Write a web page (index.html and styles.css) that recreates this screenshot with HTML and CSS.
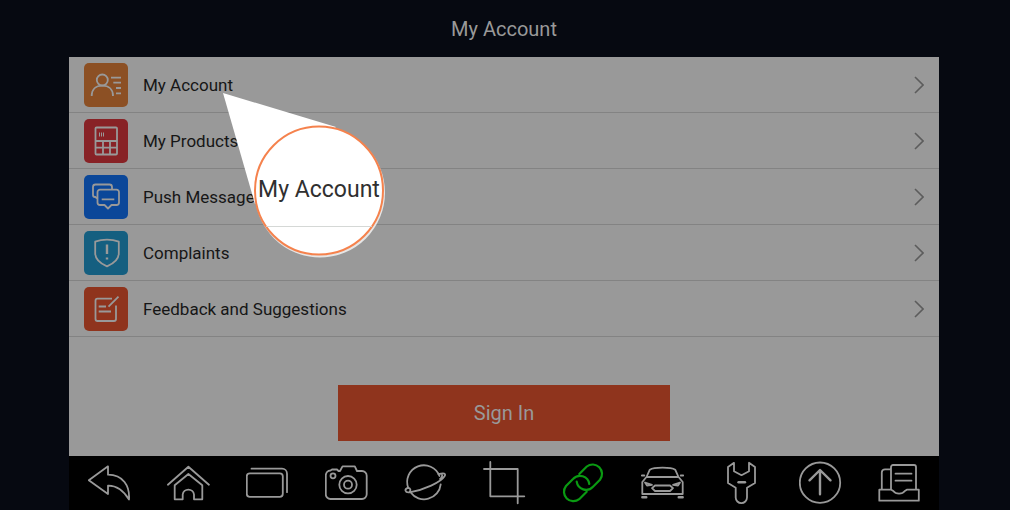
FILE: index.html
```html
<!DOCTYPE html>
<html lang="en">
<head>
<meta charset="utf-8">
<title>My Account</title>
<link rel="stylesheet" href="styles.css">
</head>
<body>
<div class="screen">
  <header class="header"><h1 class="title">My Account</h1></header>
  <main class="panel">
    <ul class="menu">
      <li><a class="row" href="#account">
        <svg class="tile orange" viewBox="0 0 44 44"><circle cx="18.300" cy="17" r="5.500"/><path d="M7.700 33c0-6.500 4-10.300 10.600-10.300S29 26.500 29 33M27 14.700h10M29.300 19.700H37M32 25h5M32 30.300h5"/></svg>
        <span class="label">My Account</span>
        <svg class="chevron" viewBox="0 0 10 18"><path d="M1 1l8 8-8 8"/></svg></a></li>
      <li><a class="row" href="#products">
        <svg class="tile red" viewBox="0 0 44 44"><rect x="11.500" y="8.500" width="21.500" height="27" rx="1"/><path d="M11.500 22H33M11.500 28.700H33M19 22v13.500M26 22v13.500"/><path class="thin" d="M15.500 13.500v4M17.500 13.500v4M19.500 13.500v4"/></svg>
        <span class="label">My Products</span>
        <svg class="chevron" viewBox="0 0 10 18"><path d="M1 1l8 8-8 8"/></svg></a></li>
      <li><a class="row" href="#messages">
        <svg class="tile blue" viewBox="0 0 44 44"><path d="M13 23.500l-1.500-1.500H11a2 2 0 0 1-2-2v-8a2.500 2.500 0 0 1 2.500-2.500h14A2.500 2.500 0 0 1 28 12v2"/><path d="M16 14.700h16.500A2.500 2.500 0 0 1 35 17.200v10.300a2.500 2.500 0 0 1-2.500 2.500H27.500l-3.500 3.500-3.500-3.500H16a2.500 2.500 0 0 1-2.500-2.500V17.200A2.500 2.500 0 0 1 16 14.700zM17.700 24.300h12.600"/></svg>
        <span class="label">Push Message</span>
        <svg class="chevron" viewBox="0 0 10 18"><path d="M1 1l8 8-8 8"/></svg></a></li>
      <li><a class="row" href="#complaints">
        <svg class="tile cyan" viewBox="0 0 44 44"><path d="M23 8.700c4.500 0 8.500.8 11.800 2v11.500c0 6-4.300 10-11.800 13.100-7.500-3.100-11.800-7.100-11.800-13.100V10.700c3.300-1.200 7.300-2 11.800-2z"/><path class="bold" d="M23 13.500V23M23 26.500v2"/></svg>
        <span class="label">Complaints</span>
        <svg class="chevron" viewBox="0 0 10 18"><path d="M1 1l8 8-8 8"/></svg></a></li>
      <li><a class="row" href="#feedback">
        <svg class="tile coral" viewBox="0 0 44 44"><path d="M28 11.700H13.500a2 2 0 0 0-2 2V32a2 2 0 0 0 2 2H30a2 2 0 0 0 2-2V18.500M34.500 9.700l-10 10M14.700 19.500H22M14.700 24.500H27"/></svg>
        <span class="label">Feedback and Suggestions</span>
        <svg class="chevron" viewBox="0 0 10 18"><path d="M1 1l8 8-8 8"/></svg></a></li>
    </ul>
    <div class="action"><button class="signin" type="button">Sign In</button></div>
  </main>
  <nav class="toolbar" aria-label="Tools">
    <button class="tool" type="button" aria-label="Back"><svg viewBox="0 0 44 44"><path d="M20 5.300L.8 19.300 20 33V24.700C28.500 24.500 35 29 41 38.500 42 25 35 13.700 20 13.700z"/></svg></button>
    <button class="tool" type="button" aria-label="Home"><svg viewBox="0 0 44 44"><path d="M.9 23.700L21.400 5.700l20.500 18M7.700 24.300L21.400 13l13.900 11.300v14H27v-4.800a5.700 5.700 0 0 0-11.300 0v4.800h-8z"/></svg></button>
    <button class="tool" type="button" aria-label="Recent apps"><svg viewBox="0 0 44 44"><rect x=".8" y="12.300" width="36" height="23.500" rx="3"/><path d="M5.500 7.700H36a5 5 0 0 1 5 5v18.500"/></svg></button>
    <button class="tool" type="button" aria-label="Screenshot"><svg viewBox="0 0 44 44"><path d="M5.500 9.500L7 8.500h5l1.500 1.500H15l2.500-4.700h12.300L32 10h5a4.700 4.700 0 0 1 4.700 4.700v18.600A4.700 4.700 0 0 1 37 38H5.500A4.700 4.700 0 0 1 .8 33.300v-19a5 5 0 0 1 4.700-4.800z"/><circle cx="23" cy="23.700" r="8.700"/><circle cx="23" cy="23.700" r="4"/><circle cx="8" cy="14.800" r="2.500"/></svg></button>
    <button class="tool" type="button" aria-label="Browser"><svg viewBox="0 0 44 44"><path d="M35.500 15A16.700 16.700 0 1 0 4.300 27M6.500 31.300A16.700 16.700 0 0 0 36.700 23.300"/><path d="M34.500 13.200c5.500-1.700 7.800-.7 6 2C37 21 20 29 5.500 31.300c-4.500.7-5.500-3.300-1.500-4.500 2.500 0 3 2.500 1.500 4.500M36 18c1.700-1 2.500-2.500 2-4.500"/></svg></button>
    <button class="tool" type="button" aria-label="Crop"><svg viewBox="0 0 44 44"><path d="M1 8h33.700v34.300M7.300 1v34.300h34"/></svg></button>
    <button class="tool active" type="button" aria-label="Connection"><svg viewBox="0 0 44 44"><path d="M17.300 13l7.500-7.500A9.400 9.400 0 0 1 38 18.700l-7 7A9.400 9.400 0 0 1 14.700 20.700"/><path d="M24.700 30.700l-7.500 7.500A9.400 9.400 0 0 1 4 25l7-7A9.400 9.400 0 0 1 27.300 23"/></svg></button>
    <button class="tool" type="button" aria-label="Vehicle"><svg viewBox="0 0 44 44"><path d="M5.500 16l3.300-7.300C13 6 30 6 34.200 8.700L37.500 16zM5 16.500L1.300 21v12h40.400V21L38 16.500M.8 14.500h2.500M39.700 14.500h2.500"/><path d="M4 21.500l7 2.300-5 .7zM39 21.500l-7 2.300 5 .7zM14 24.500h15l3 2.700-3 2.800H14l-3-2.800z"/><path class="thick" d="M1.300 36.200h4M37.700 36.200h4"/></svg></button>
    <button class="tool" type="button" aria-label="Settings"><svg viewBox="0 0 44 44"><path d="M14 1.800L8 6v16l7.700 4.800v9.700a5.600 5.600 0 0 0 11.300 0v-9.700L35 22V6l-6-4.200v8.400l-7.500 4-7.500-4z"/><path class="thick" d="M18.500 21.200H25"/></svg></button>
    <button class="tool" type="button" aria-label="Upload"><svg viewBox="0 0 44 44"><circle cx="21" cy="21.700" r="20.200"/><path class="thick" d="M21 33.300v-24M10.500 19.300L21 9l10.500 10.300"/></svg></button>
    <button class="tool" type="button" aria-label="Documents"><svg viewBox="0 0 44 44"><path d="M1.300 28.700h12l2 1.300c2.500 3.500 9 3.500 11.500 0l2-1.300h12v11H1.300zM3.800 28.700V11.500A3.200 3.200 0 0 1 7 8.300h5M13 28.700V6a2 2 0 0 1 2-2h21a2 2 0 0 1 2 2v22.700M17.500 12.700h16M17.500 19.700h16"/></svg></button>
  </nav>
  <div class="callout" aria-hidden="true">
    <svg class="callout-shape" viewBox="0 0 166 172"><defs><clipPath id="lens"><circle cx="97" cy="98.500" r="64"/></clipPath></defs><circle class="halo" cx="98" cy="100.500" r="65"/><path class="beam" d="M1 1L114 35 33 112z"/><circle class="lens" cx="97" cy="98.500" r="64"/><path class="lens-line" clip-path="url(#lens)" d="M33 134.500h128"/></svg>
    <span class="callout-text">My Account</span>
  </div>
</div>
</body>
</html>
```
FILE: styles.css
```css
* { box-sizing: border-box; }
body { margin: 0; background: #060911; font-family: Roboto, "Liberation Sans", sans-serif; }
.screen { position: relative; display: flex; flex-direction: column; min-height: 100vh; padding: 0 71px 0 69px; }
.header { display: flex; align-items: center; justify-content: center; height: 57px; }
.title { margin: 0; font-size: 20px; line-height: 24px; font-weight: 400; color: #999; }
.panel { flex: 1; display: flex; flex-direction: column; background: #999; }
.menu { margin: 0; padding: 0; list-style: none; }
.row { display: flex; align-items: center; height: 56px; padding: 0 15px; border-bottom: 1px solid #838383; color: #161616; text-decoration: none; }
.tile { width: 44px; height: 44px; margin-right: 15px; border-radius: 5px; fill: none; stroke: #999; stroke-width: 1.8; stroke-linejoin: round; }
.tile .thin { stroke-width: 1; }
.tile .bold { stroke-width: 2.4; }
.orange { background: #8c5024; }
.red { background: #882226; }
.blue { background: #0b4799; }
.cyan { background: #155f80; }
.coral { background: #8f341d; }
.label { flex: 1; font-size: 17px; line-height: 24px; }
.chevron { width: 10px; height: 18px; fill: none; stroke: #5c5c5c; stroke-width: 1.6; }
.action { display: flex; justify-content: center; padding: 48px 0 14px; }
.signin { width: 332px; height: 56px; padding: 0; border: 0; background: #8f341d; color: #999; font: 400 20px/24px Roboto, "Liberation Sans", sans-serif; }
.toolbar { display: flex; align-items: center; justify-content: space-between; height: 54px; padding: 0 17px 0 19px; background: #000; }
.tool { display: flex; padding: 0; border: 0; background: none; color: #999; }
.tool svg { width: 44px; height: 44px; fill: none; stroke: currentColor; stroke-width: 1.8; stroke-linejoin: round; stroke-linecap: round; }
.tool .thick { stroke-width: 2.4; }
.tool.active { color: #0a9a12; }
.tool.active svg { stroke-width: 2.2; }
.callout { position: absolute; left: 222px; top: 92px; width: 166px; height: 172px; }
.callout-shape { display: block; width: 100%; height: 100%; }
.beam { fill: #fff; }
.halo { fill: #e6e6e6; }
.lens { fill: #fff; stroke: #f5824d; stroke-width: 2; }
.lens-line { stroke: #d5d8d6; stroke-width: 1; }
.callout-text { position: absolute; left: 32px; right: 4px; top: 84px; text-align: center; font-size: 23px; line-height: 28px; color: #303030; }
```
